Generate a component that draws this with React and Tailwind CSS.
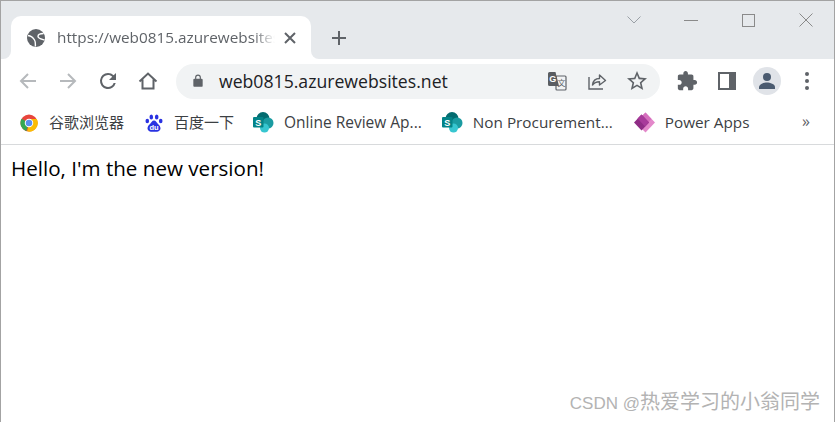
import React from 'react';

const ICON = '#5f6368';

const Globe = () => (
  <svg width="18" height="18" viewBox="0 0 18 18" fill="none">
    <circle cx="9" cy="9" r="9" fill={ICON} />
    <path d="M1 6.500C4 7 6 8.500 7.500 11S8 15 8.500 17.500" stroke="#fff" strokeWidth="1.400" />
    <path d="M16.500 4.500C14 4.500 11 5.500 11 7.500S14 10 17.500 11" stroke="#fff" strokeWidth="1.400" />
  </svg>
);

const Arrow = ({ flip, color }) => (
  <svg width="20" height="20" viewBox="0 0 20 20" fill="none" stroke={color} strokeWidth="2" className={flip ? 'rotate-180' : ''}>
    <path d="M18 10H3M10 3l-7 7 7 7" />
  </svg>
);

const Reload = () => (
  <svg width="24" height="24" viewBox="0 0 24 24" fill={ICON}>
    <path d="M17.65 6.35A7.95 7.95 0 0 0 12 4a8 8 0 1 0 7.73 10h-2.08A6 6 0 1 1 12 6c1.66 0 3.14.69 4.22 1.78L13 11h7V4l-2.35 2.35z" />
  </svg>
);

const Home = () => (
  <svg width="20" height="20" viewBox="0 0 20 20" fill="none" stroke={ICON} strokeWidth="2">
    <path d="M1.500 10.500 10 2.500l8.500 8M4.500 8.500V17.500h11V8.500" />
  </svg>
);

const Lock = () => (
  <svg width="14" height="14" viewBox="0 0 24 24" fill={ICON}>
    <path d="M18 8h-1V6A5 5 0 0 0 7 6v2H6a2 2 0 0 0-2 2v10c0 1.100.9 2 2 2h12a2 2 0 0 0 2-2V10a2 2 0 0 0-2-2zM9 8V6a3 3 0 0 1 6 0v2H9z" />
  </svg>
);

const Translate = () => (
  <svg width="20" height="20" viewBox="0 0 20 20">
    <rect x="9" y="5" width="10" height="14" rx="1" fill="#f1f3f4" stroke={ICON} strokeWidth="1.200" />
    <path d="M2.500 1H8.500l3.500 14H2.500A1.500 1.500 0 0 1 1 13.500V2.500A1.500 1.500 0 0 1 2.500 1z" fill="#5a5d61" />
    <text x="5.800" y="11" textAnchor="middle" fontSize="9" fontWeight="700" fontFamily="Liberation Sans" fill="#fff">G</text>
    <text x="14.500" y="15" textAnchor="middle" fontSize="8" fontFamily="Noto Sans CJK SC" fill={ICON}>文</text>
  </svg>
);

const Share = () => (
  <svg width="20" height="20" viewBox="0 0 20 20" fill="none" stroke={ICON} strokeWidth="1.400">
    <path d="M2 6v12h14" />
    <path d="M5.500 14c.5-4 3-6.500 7-6.500V4l6 5.500-6 4.500v-3.200c-3 0-5.500 1-7 3.200z" strokeLinejoin="round" />
  </svg>
);

const Star = () => (
  <svg width="24" height="24" viewBox="0 0 24 24" fill={ICON}>
    <path d="M22 9.240l-7.190-.62L12 2 9.190 8.630 2 9.240l5.460 4.730L5.820 21 12 17.270 18.180 21l-1.630-7.030L22 9.240zM12 15.400l-3.760 2.270 1-4.280-3.320-2.880 4.380-.38L12 6.100l1.710 4.040 4.380.38-3.320 2.880 1 4.280L12 15.400z" />
  </svg>
);

const Puzzle = () => (
  <svg width="22" height="22" viewBox="0 0 24 24" fill={ICON}>
    <path d="M20.500 11H19V7c0-1.100-.9-2-2-2h-4V3.500C13 2.120 11.880 1 10.500 1S8 2.120 8 3.500V5H4c-1.100 0-1.990.9-1.990 2v3.800H3.500c1.490 0 2.700 1.210 2.700 2.700s-1.210 2.700-2.700 2.700H2V20c0 1.100.9 2 2 2h3.800v-1.500c0-1.490 1.210-2.700 2.700-2.700 1.490 0 2.700 1.210 2.700 2.700V22H17c1.100 0 2-.9 2-2v-4h1.500c1.380 0 2.500-1.120 2.500-2.500S21.880 11 20.500 11z" />
  </svg>
);

const Panel = () => (
  <svg width="18" height="18" viewBox="0 0 18 18" fill="none">
    <rect x="1" y="1" width="16" height="16" stroke={ICON} strokeWidth="2" />
    <rect x="11" y="1" width="6" height="16" fill={ICON} />
  </svg>
);

const Person = () => (
  <svg width="18" height="18" viewBox="0 0 18 18" fill="#4b5b70">
    <circle cx="9" cy="5" r="4" />
    <path d="M1 17v-2c0-3 5-4.500 8-4.500s8 1.500 8 4.500v2z" />
  </svg>
);

const Dots = () => (
  <svg width="4" height="18" viewBox="0 0 4 18" fill={ICON}>
    <circle cx="2" cy="2" r="2" />
    <circle cx="2" cy="9" r="2" />
    <circle cx="2" cy="16" r="2" />
  </svg>
);

const ChromeLogo = () => (
  <svg width="18" height="18" viewBox="0 0 20 20">
    <circle cx="10" cy="10" r="9.500" fill="#e8453c" />
    <path d="M10 10 1.800 5.300A9.500 9.500 0 0 0 7 19.100z" fill="#34a853" />
    <path d="M10 5.500h8.600A9.500 9.500 0 0 1 8 19.300L10 10z" fill="#fbbc04" />
    <circle cx="10" cy="10" r="4.700" fill="#fff" />
    <circle cx="10" cy="10" r="3.600" fill="#5a8fee" />
  </svg>
);

const BaiduLogo = () => (
  <svg width="18" height="18" viewBox="0 0 18 18" fill="#2932e1">
    <ellipse cx="6.300" cy="3" rx="1.800" ry="2.500" />
    <ellipse cx="11.700" cy="3" rx="1.800" ry="2.500" />
    <ellipse cx="2.300" cy="7" rx="1.800" ry="2.300" />
    <ellipse cx="15.700" cy="7" rx="1.800" ry="2.300" />
    <path d="M9 6.500c2 0 2.500 2 4 3.500s2.500 2.500 2.500 4.500-2 3.200-3.500 3.200H6c-1.500 0-3.500-1.200-3.500-3.200S3.500 11.500 5 10s2-3.500 4-3.500z" />
    <text x="9" y="15.800" textAnchor="middle" fontSize="7.500" fontWeight="700" fontFamily="Liberation Sans" fill="#fff">du</text>
  </svg>
);

const SharePointLogo = () => (
  <svg width="21" height="21" viewBox="0 0 21 21">
    <circle cx="10" cy="6.500" r="6.500" fill="#036c70" />
    <circle cx="15" cy="11" r="5.500" fill="#1a9ba1" />
    <circle cx="11.500" cy="16" r="4.500" fill="#37c6d0" />
    <rect x="0" y="5" width="10.500" height="10.500" rx="1" fill="#038387" />
    <text x="5.200" y="13.500" textAnchor="middle" fontSize="9" fontWeight="700" fontFamily="Liberation Sans" fill="#fff">S</text>
  </svg>
);

const PowerAppsLogo = () => (
  <svg width="21" height="21" viewBox="0 0 21 21">
    <path d="M11.500 .5 21 10.500 11.500 20.500 8 17 8 4z" fill="#e388ca" />
    <path d="M11.500 .5 8 4l6 6.500 3.500-3.500z" fill="#d56fbd" />
    <path d="M7.500 2.500 15 10.500 7.500 18.500 0 10.500z" fill="#8f2c85" />
    <path d="M7.500 2.500 15 10.500 11 14.500 3.500 6.500z" fill="#a83a9a" />
  </svg>
);

const NavButton = ({ children }) => (
  <div className="w-10 h-10 flex items-center justify-center">{children}</div>
);

const Bookmark = ({ icon, label, className, textClass = 'text-[15.3px]' }) => (
  <div className={`flex items-center shrink-0 gap-[10px] ${className}`}>
    <div className="w-[21px] flex justify-center">{icon}</div>
    <span className={`${textClass} text-[#3c4043] whitespace-nowrap`}>{label}</span>
  </div>
);

export default function App() {
  return (
    <div className="w-[835px] h-[422px] relative overflow-hidden bg-white border border-b-0 border-[#a3a3a3] font-['Open_Sans','Noto_Sans_CJK_SC',sans-serif]">
      {/* Tab strip */}
      <div className="h-[58px] bg-[#e6e9ec] flex items-end pl-[10px]">
        <div className="relative w-[300px] h-[43px] bg-white rounded-t-[10px] flex items-center pl-4 pr-3 text-[#5f6368]">
          <div className="absolute -left-2 bottom-0 w-2 h-2 bg-white">
            <div className="w-full h-full bg-[#e6e9ec] rounded-br-[8px]" />
          </div>
          <div className="absolute -right-2 bottom-0 w-2 h-2 bg-white">
            <div className="w-full h-full bg-[#e6e9ec] rounded-bl-[8px]" />
          </div>
          <Globe />
          <div className="ml-[12px] w-[218px] overflow-hidden whitespace-nowrap text-[15.3px] [mask-image:linear-gradient(to_right,black_90%,transparent)]">
            https://web0815.azurewebsites.net
          </div>
          <svg className="ml-[9px]" width="12" height="12" viewBox="0 0 12 12" stroke={ICON} strokeWidth="2">
            <path d="M1 1l10 10M11 1 1 11" />
          </svg>
        </div>
        <div className="w-[56px] h-[43px] flex items-center justify-center">
          <svg width="16" height="16" viewBox="0 0 16 16" stroke={ICON} strokeWidth="2">
            <path d="M8 1v14M1 8h14" />
          </svg>
        </div>
        {/* Window controls */}
        <div className="ml-auto self-start flex items-center h-[38px] pr-[21px]">
          <svg width="14" height="8" viewBox="0 0 14 8" fill="none" stroke="#9aa0a6">
            <path d="M.5.500 7 7l6.500-6.500" />
          </svg>
          <div className="ml-[43px] w-[14px] h-px bg-[#8a8a8a]" />
          <div className="ml-[44px] w-[13px] h-[13px] border border-[#8a8a8a]" />
          <svg className="ml-[44px]" width="14" height="14" viewBox="0 0 14 14" stroke="#8a8a8a">
            <path d="M.5.500l13 13M13.500.500l-13 13" />
          </svg>
        </div>
      </div>

      {/* Toolbar */}
      <div className="h-[44px] flex items-center pl-[7px]">
        <NavButton><Arrow color="#b6b9bc" /></NavButton>
        <NavButton><Arrow color="#b6b9bc" flip /></NavButton>
        <NavButton><Reload /></NavButton>
        <NavButton><Home /></NavButton>
        <div className="ml-2 w-[484px] h-[35px] rounded-full bg-[#f1f3f4] flex items-center pl-[15px]">
          <Lock />
          <span className="ml-[14px] text-[17.65px] text-[#202124]">web0815.azurewebsites.net</span>
          <div className="ml-auto flex items-center pr-[3px]">
            <NavButton><Translate /></NavButton>
            <NavButton><Share /></NavButton>
            <NavButton><Star /></NavButton>
          </div>
        </div>
        <div className="ml-[7px] flex">
          <NavButton><Puzzle /></NavButton>
          <NavButton><Panel /></NavButton>
          <NavButton>
            <div className="w-7 h-7 rounded-full bg-[#e0e3e8] flex items-center justify-center"><Person /></div>
          </NavButton>
          <NavButton><Dots /></NavButton>
        </div>
      </div>

      {/* Bookmarks bar */}
      <div className="h-[42px] flex items-center pl-[17px] pb-[2px] border-b border-[#d8dadc]">
        <Bookmark icon={<ChromeLogo />} label="谷歌浏览器" textClass="text-[15px]" />
        <Bookmark icon={<BaiduLogo />} label="百度一下" textClass="text-[15px]" className="ml-[19px]" />
        <Bookmark icon={<SharePointLogo />} label="Online Review Ap..." textClass="text-[15.5px]" className="ml-[19px]" />
        <Bookmark icon={<SharePointLogo />} label="Non Procurement..." className="ml-[20px]" />
        <Bookmark icon={<PowerAppsLogo />} label="Power Apps" className="ml-[21px]" />
        <span className="ml-auto mr-[24px] -mt-1 text-[16px] text-[#5f6368]">»</span>
      </div>

      {/* Page */}
      <p className="pl-[10px] pt-[8px] text-[20.6px] leading-[30px] text-black">Hello, I'm the new version!</p>

      {/* Watermark */}
      <div className="absolute right-[14px] bottom-[4px] text-[20px] leading-[28px] text-[#b3b3b3] font-['Liberation_Sans','Noto_Sans_CJK_SC',sans-serif]">
        <span className="text-[17px]">CSDN @</span>热爱学习的小翁同学
      </div>
    </div>
  );
}
